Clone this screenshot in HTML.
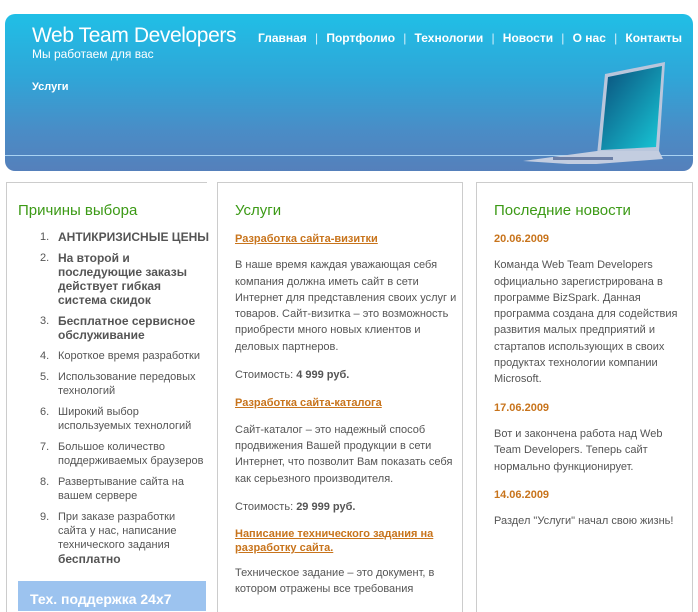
<!DOCTYPE html>
<html><head><meta charset="utf-8"><style>
*{margin:0;padding:0;box-sizing:border-box}
body{width:698px;height:606px;overflow:hidden;background:#fff;font-family:"Liberation Sans",Tahoma,sans-serif;font-size:11px;color:#555;position:relative}
.hdr{position:absolute;left:5px;top:14px;width:688px;height:157px;border-radius:10px;background:linear-gradient(#20bfe6 0%,#2fa6d8 40%,#4a8cc6 75%,#5580bb 100%);overflow:hidden}
.hline{position:absolute;left:0;top:141px;width:100%;height:1px;background:#a9d3f2}
.logo{position:absolute;left:27px;top:10px;color:#fff;font-size:21px;letter-spacing:-0.4px}
.sub{position:absolute;left:27px;top:33px;color:#fff;font-size:12px}
.usl{position:absolute;left:27px;top:67px;color:#fff;font-size:11px;font-weight:bold}
.nav{position:absolute;left:253px;top:17px;color:#fff;font-size:12px;font-weight:bold;white-space:nowrap}
.nav span{font-weight:normal;margin:0 8.2px;color:#d8f0fb}
.box{position:absolute;top:182px;height:430px;border:1px solid #ccc;border-bottom:none}
h2{font-weight:normal;font-size:15px;color:#3c9a16;position:absolute}
ol{position:absolute;left:18px;width:188px;list-style:none}
ol li{position:relative;padding-left:40px;line-height:14px;margin-bottom:7px}
ol li.b{font-weight:bold;font-size:12px;line-height:14px}
ol li.b i{font-weight:normal;font-size:11px}
ol li i{position:absolute;left:22px;font-style:normal}
.c{position:absolute;line-height:16.3px;width:230px}
a.t{color:#c8741c;font-weight:bold;text-decoration:underline}
.d{color:#c8741c;font-weight:bold}
.tex{position:absolute;left:18px;top:581px;width:188px;height:30px;background:#9cc3ef;color:#fff;font-weight:bold;font-size:14px;padding:10px 0 0 12px}
</style></head><body>
<div class="hdr">
<div class="logo">Web Team Developers</div>
<div class="sub">Мы работаем для вас</div>
<div class="usl">Услуги</div>
<div class="nav">Главная<span>|</span>Портфолио<span>|</span>Технологии<span>|</span>Новости<span>|</span>О нас<span>|</span>Контакты</div>
<div class="hline"></div>
<svg style="position:absolute;left:508px;top:45px" width="160" height="105" viewBox="0 0 160 105">
<defs><linearGradient id="g" x1="0" y1="0" x2="1" y2="1"><stop offset="0" stop-color="#0a4d7a"/><stop offset="1" stop-color="#18c9d8"/></linearGradient></defs>
<polygon points="92,15 152,3 146,92 84,96" fill="#b9c6dc"/>
<polygon points="95,18 149,7 143,88 88,91" fill="url(#g)"/>
<polygon points="10,102 84,92 146,92 150,100 70,106" fill="#c3cde0"/>
<rect x="40" y="98" width="60" height="3" fill="#6c7fa6"/>
</svg>
</div>
<div class="box" style="left:6px;width:201px;border-right:none"></div>
<h2 style="left:18px;top:202px">Причины выбора</h2>
<ol style="top:230px">
<li class="b" style="white-space:nowrap"><i>1.</i>АНТИКРИЗИСНЫЕ ЦЕНЫ</li>
<li class="b"><i>2.</i>На второй и последующие заказы действует гибкая система скидок</li>
<li class="b"><i>3.</i>Бесплатное сервисное обслуживание</li>
<li><i>4.</i>Короткое время разработки</li>
<li><i>5.</i>Использование передовых технологий</li>
<li><i>6.</i>Широкий выбор используемых технологий</li>
<li><i>7.</i>Большое количество поддерживаемых браузеров</li>
<li><i>8.</i>Развертывание сайта на вашем сервере</li>
<li><i>9.</i>При заказе разработки сайта у нас, написание технического задания <b style="font-size:12px">бесплатно</b></li>
</ol>
<div class="tex">Тех. поддержка 24x7</div>
<div class="box" style="left:217px;width:246px"></div>
<h2 style="left:235px;top:202px">Услуги</h2>
<div class="c" style="left:235px;top:231px">
<a class="t">Разработка сайта-визитки</a>
<p style="margin-top:10px">В наше время каждая уважающая себя компания должна иметь сайт в сети Интернет для представления своих услуг и товаров. Сайт-визитка – это возможность приобрести много новых клиентов и деловых партнеров.</p>
<p style="margin-top:12px">Стоимость: <b>4 999 руб.</b></p>
<p style="margin-top:12px"><a class="t">Разработка сайта-каталога</a></p>
<p style="margin-top:10px">Сайт-каталог – это надежный способ продвижения Вашей продукции в сети Интернет, что позволит Вам показать себя как серьезного производителя.</p>
<p style="margin-top:12px">Стоимость: <b>29 999 руб.</b></p>
<p style="margin-top:12px;line-height:14px"><a class="t">Написание технического задания на разработку сайта.</a></p>
<p style="margin-top:10px">Техническое задание – это документ, в котором отражены все требования</p>
</div>
<div class="box" style="left:476px;width:217px"></div>
<h2 style="left:494px;top:202px">Последние новости</h2>
<div class="c" style="left:494px;top:231px;width:190px">
<div class="d">20.06.2009</div>
<p style="margin-top:10px">Команда Web Team Developers официально зарегистрирована в программе BizSpark. Данная программа создана для содействия развития малых предприятий и стартапов использующих в своих продуктах технологии компании Microsoft.</p>
<p class="d" style="margin-top:12px">17.06.2009</p>
<p style="margin-top:10px">Вот и закончена работа над Web Team Developers. Теперь сайт нормально функционирует.</p>
<p class="d" style="margin-top:12px">14.06.2009</p>
<p style="margin-top:10px">Раздел "Услуги" начал свою жизнь!</p>
</div>
</body></html>
